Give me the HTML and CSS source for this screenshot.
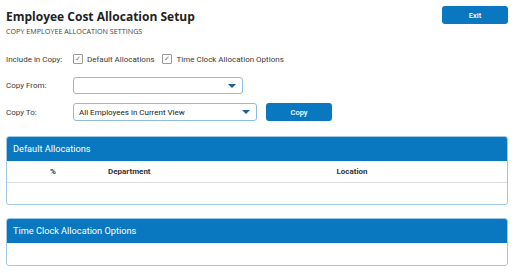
FILE: index.html
```html
<!DOCTYPE html>
<html lang="en">

<head>
    <meta charset="UTF-8">
    <meta name="viewport" content="width=device-width, initial-scale=1.0">
    <title>Employee Cost Allocation Setup</title>
    <link rel="stylesheet" href="styles.css">
</head>

<body>
    <header class="page-head">
        <div>
            <h1>Employee Cost Allocation Setup</h1>
            <p class="subtitle">COPY EMPLOYEE ALLOCATION SETTINGS</p>
        </div>
        <button class="btn btn-exit">Exit</button>
    </header>

    <div class="form-row">
        <span class="label">Include in Copy:</span>
        <label class="check"><span class="box">&#10003;</span>Default Allocations</label>
        <label class="check"><span class="box">&#10003;</span>Time Clock Allocation Options</label>
    </div>

    <div class="form-row">
        <span class="label">Copy From:</span>
        <div class="select select-from">
            <span></span>
            <span class="arrow"></span>
        </div>
    </div>

    <div class="form-row">
        <span class="label">Copy To:</span>
        <div class="select select-to">
            <span>All Employees in Current View</span>
            <span class="arrow"></span>
        </div>
        <button class="btn btn-copy">Copy</button>
    </div>

    <section class="panel panel-default">
        <div class="panel-head">Default Allocations</div>
        <div class="table-head">
            <span class="col-pct">%</span>
            <span class="col-dept">Department</span>
            <span class="col-loc">Location</span>
        </div>
        <div class="table-body"></div>
    </section>

    <section class="panel panel-clock">
        <div class="panel-head">Time Clock Allocation Options</div>
        <div class="panel-body"></div>
    </section>
</body>
</html>
```

FILE: styles.css
```css
body {
    font-family: 'Roboto', 'Liberation Sans', sans-serif;
    font-size: 8px;
    color: #3a3a3a;
    margin: 0;
    padding: 6px 7px 0 6px;
    background-color: #fff;
}

.page-head {
    display: flex;
    justify-content: space-between;
    align-items: flex-start;
    height: 44px;
}

h1 {
    font-family: 'Open Sans', 'Liberation Sans', sans-serif;
    font-size: 12px;
    font-weight: bold;
    color: #222;
    margin: 2px 0 0 0;
    line-height: 17px;
}

.subtitle {
    font-family: 'Open Sans', 'Liberation Sans', sans-serif;
    font-size: 7.2px;
    color: #444;
    margin: 1px 0 0 0;
}

.btn {
    background-color: #0a78c0;
    color: white;
    border: none;
    border-radius: 3px;
    font-family: 'Roboto', 'Liberation Sans', sans-serif;
    font-size: 7.5px;
    font-weight: 500;
    cursor: pointer;
}

.btn-exit {
    width: 66px;
    height: 18px;
}

.form-row {
    display: flex;
    align-items: center;
    height: 18px;
    margin-bottom: 8.5px;
}

.label {
    width: 67px;
    flex-shrink: 0;
}

.check {
    display: flex;
    align-items: center;
    margin-right: 8px;
}

.box {
    width: 8px;
    height: 8px;
    border: 1px solid #999;
    border-radius: 1px;
    margin-right: 4px;
    font-size: 7px;
    line-height: 8px;
    text-align: center;
    color: #777;
}

.select {
    display: flex;
    justify-content: space-between;
    align-items: center;
    height: 17px;
    box-sizing: border-box;
    border: 1px solid #8cbde0;
    border-radius: 3px;
    padding: 0 6px 0 5px;
    color: #222;
}

.select-from {
    width: 170px;
}

.select-to {
    width: 184px;
    height: 18px;
}

.arrow {
    width: 0;
    height: 0;
    border-left: 4px solid transparent;
    border-right: 4px solid transparent;
    border-top: 4px solid #1a5e9a;
}

.btn-copy {
    width: 66px;
    height: 18px;
    margin-left: 9px;
}

.panel {
    border: 1px solid #9fc9e4;
    border-radius: 3px;
    overflow: hidden;
}

.panel-default {
    margin-top: 15px;
}

.panel-clock {
    margin-top: 13px;
}

.panel-head {
    background-color: #0a78c0;
    color: white;
    font-size: 9.2px;
    height: 24px;
    line-height: 24px;
    padding-left: 6px;
}

.table-head {
    display: grid;
    grid-template-columns: 92px 98px 1fr;
    height: 21px;
    line-height: 21px;
    border-bottom: 1px solid #ddd;
    font-weight: bold;
    font-size: 8px;
    color: #333;
}

.col-pct {
    text-align: center;
}

.col-dept {
    padding-left: 9px;
}

.col-loc {
    text-align: center;
}

.table-body {
    height: 21px;
}

.panel-body {
    height: 22px;
}
```
